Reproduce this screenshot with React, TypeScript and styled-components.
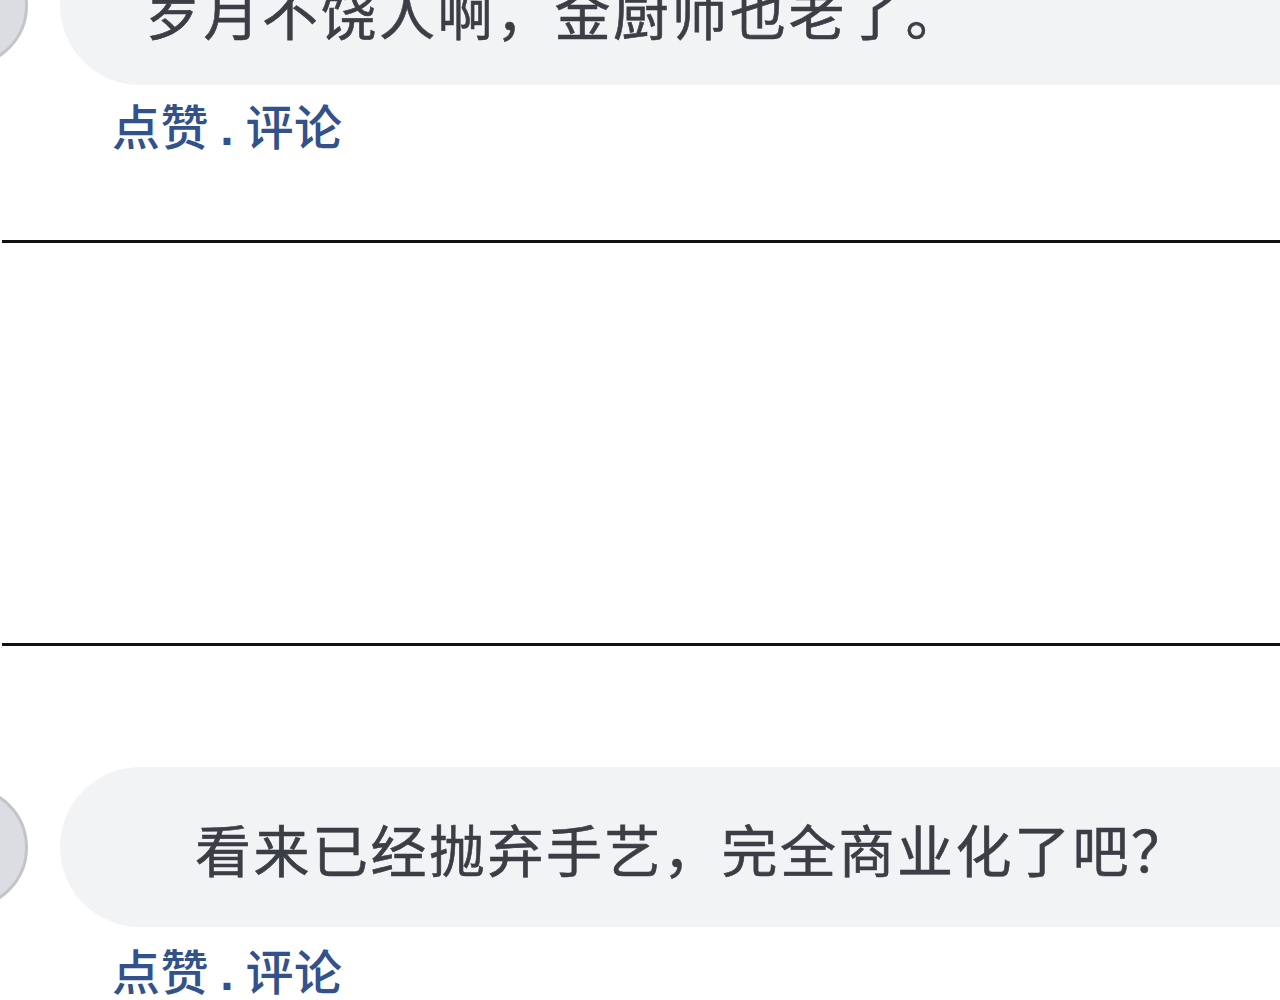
import React from "react";
import styled, { createGlobalStyle } from "styled-components";

interface CommentProps {
  text: string;
  padLeft: number;
  padTop?: number;
  gap?: number;
}

const GlobalStyle = createGlobalStyle`
  html, body {
    margin: 0;
    padding: 0;
    background: #ffffff;
    overflow: hidden;
  }
  body {
    font-family: "Noto Sans CJK SC", "Noto Sans", sans-serif;
  }
`;

const Comment: React.FC<CommentProps> = ({ text, padLeft, padTop = 0, gap = 18 }) => {
  return (
    <CommentBlock>
      <CommentRow>
        <Avatar />
        <Bubble $padLeft={padLeft} $padTop={padTop}>
          {text}
        </Bubble>
      </CommentRow>
      <Actions $gap={gap}>
        点赞 <Dot>.</Dot> 评论
      </Actions>
    </CommentBlock>
  );
};

const App: React.FC = () => {
  return (
    <Page>
      <GlobalStyle />
      <TopSection>
        <Comment text="岁月不饶人啊，金厨师也老了。" padLeft={85} padTop={10} gap={14} />
      </TopSection>
      <Divider $top={91} />
      <Divider $top={400} />
      <BottomSection>
        <Comment text="看来已经抛弃手艺，完全商业化了吧？" padLeft={135} gap={17} />
      </BottomSection>
    </Page>
  );
};

const Page = styled.div`
  width: 1280px;
  height: 1000px;
  overflow: hidden;
  display: flex;
  flex-direction: column;
`;

const TopSection = styled.section`
  margin-top: -75px;
`;

const BottomSection = styled.section`
  margin-top: 121px;
`;

const CommentBlock = styled.div`
  display: flex;
  flex-direction: column;
`;

const CommentRow = styled.div`
  display: flex;
  align-items: center;
  gap: 32px;
  height: 160px;
  margin-left: -95px;
  margin-right: -40px;
`;

const Avatar = styled.div`
  flex: 0 0 auto;
  width: 117px;
  height: 117px;
  border-radius: 50%;
  background: #dcdde2;
  border: 3px solid #c3c5ca;
`;

const Bubble = styled.div<{ $padLeft: number; $padTop: number }>`
  flex: 1;
  height: 160px;
  box-sizing: border-box;
  display: flex;
  align-items: center;
  padding-left: ${(p) => p.$padLeft}px;
  padding-top: ${(p) => p.$padTop}px;
  border-radius: 80px 0 0 80px;
  background: #f2f3f5;
  color: #3b3e45;
  font-size: 56px;
  letter-spacing: 2.5px;
  white-space: nowrap;
  -webkit-text-stroke: 0.6px #3b3e45;
`;

const Actions = styled.div<{ $gap: number }>`
  margin-top: ${(p) => p.$gap}px;
  padding-left: 112px;
  height: 50px;
  line-height: 50px;
  font-size: 48px;
  font-weight: 500;
  letter-spacing: 0.5px;
  color: #33518b;
  white-space: pre;
`;

const Dot = styled.span`
  font-family: "Liberation Sans", sans-serif;
  font-weight: 700;
`;

const Divider = styled.hr<{ $top: number }>`
  margin: ${(p) => p.$top}px 0 0 2px;
  border: none;
  height: 3px;
  background: #111111;
  width: 1280px;
`;

export default App;
